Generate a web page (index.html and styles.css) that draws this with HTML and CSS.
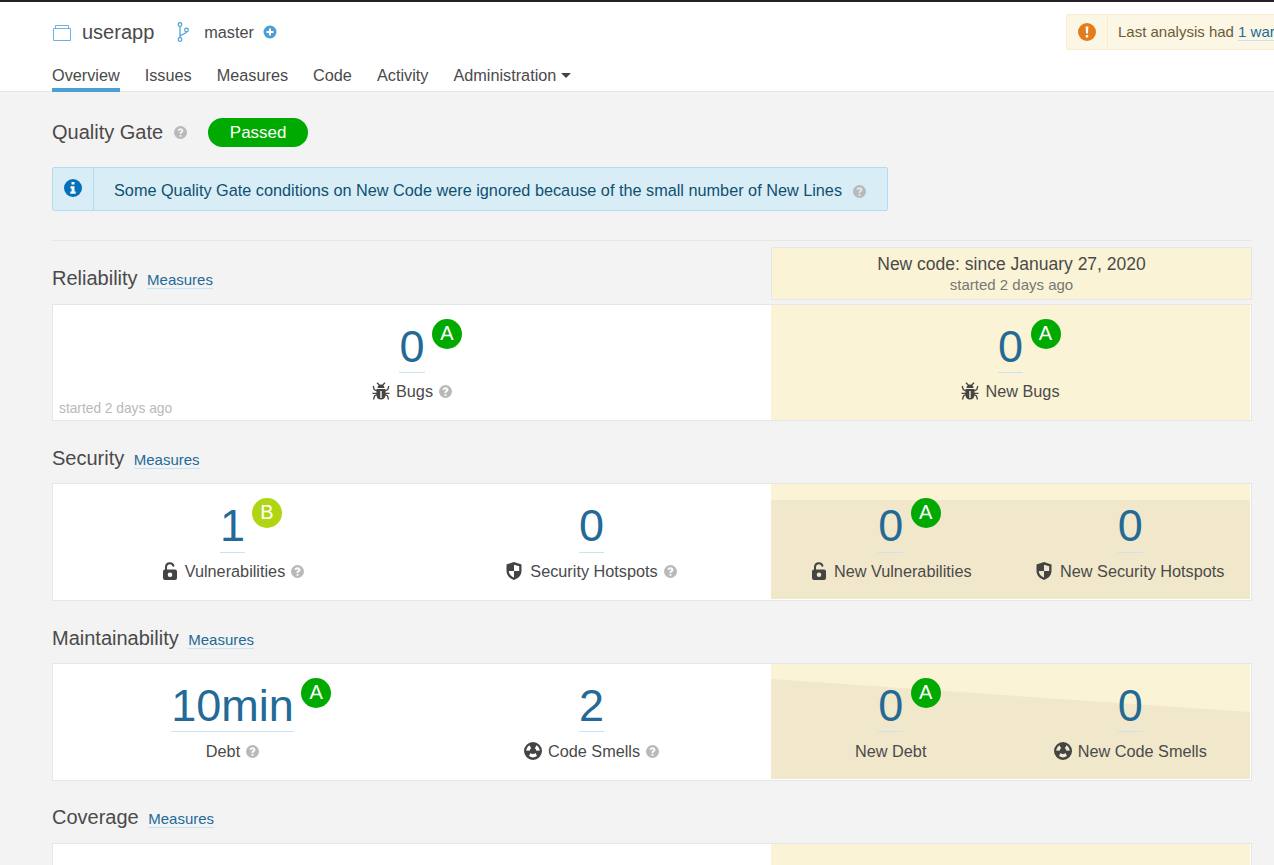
FILE: index.html

```html
<!DOCTYPE html>
<html lang="en">
<head>
    <meta charset="UTF-8">
    <title>userapp</title>
    <link rel="stylesheet" href="styles.css">
</head>
<body>
    <svg class="sprites" width="0" height="0">
        <symbol id="help" viewBox="0 0 14 14"><path fill-rule="evenodd" d="M7 0a7 7 0 1 1 0 14A7 7 0 0 1 7 0zM6 9.600v2h2v-2zM7 2.400c-1.800 0-3 1-3.200 2.700l2 .3c.1-.8.5-1.200 1.100-1.200.6 0 1 .3 1 .9 0 .5-.3.8-.9 1.200-.9.6-1 1.200-1 2.400h2c0-.7.1-.9.8-1.400.9-.6 1.300-1.300 1.300-2.300C10.100 3.400 8.800 2.400 7 2.400z"/></symbol>
        <symbol id="bug" viewBox="0 0 18 18"><path d="M5.500 6c0-2.200 1.500-3.500 3.500-3.500s3.500 1.300 3.500 3.500z"/><path fill-rule="evenodd" d="M4.500 7h9v6c0 3-2 4.500-4.500 4.500S4.500 16 4.500 13zM8.300 9v7h1.400V9z"/><path fill="none" stroke="currentColor" stroke-width="1.300" d="M5 .8l2.500 2.500M13 .8l-2.500 2.500M1.200 4l1 3.500L5 9M16.800 4l-1 3.500L13 9M.5 11.300H5M17.500 11.300H13M1.500 17.500l1-3.500L5 12.500M16.500 17.500l-1-3.500-2.500-1.500"/></symbol>
        <symbol id="lock" viewBox="1 0 14 18"><path fill="none" stroke="currentColor" stroke-width="2" stroke-linecap="round" d="M4 8V5a3.800 3.800 0 0 1 7.400-1.200"/><path fill-rule="evenodd" d="M3 7.500h10a2 2 0 0 1 2 2V16a2 2 0 0 1-2 2H3a2 2 0 0 1-2-2V9.500a2 2 0 0 1 2-2zm5 3a2.300 2.300 0 1 0 0 4.600 2.300 2.300 0 0 0 0-4.600z"/></symbol>
        <symbol id="shield" viewBox="0 0 16 18"><path fill-rule="evenodd" d="M8 0l7.500 2.500V9c0 4.500-3.500 7.500-7.500 9-4-1.500-7.500-4.500-7.500-9V2.500zM8 2.700v6.300h5.200V4.300zM8 9H2.800c0 3.200 2.400 5.300 5.200 6.500z"/></symbol>
        <symbol id="smell" viewBox="0 0 18 18"><path fill-rule="evenodd" d="M9 0a9 9 0 1 1 0 18A9 9 0 0 1 9 0zM7.200 6.300a3.400 3.400 0 0 0-1.600 2.500L2 8.500a7 7 0 0 1 3.400-5.300zM10.800 6.300l1.800-3.100A7 7 0 0 1 16 8.500l-3.600.3a3.400 3.400 0 0 0-1.600-2.500zM6.500 11l-1.500 3.100a7 7 0 0 0 8 0L11.500 11a3.400 3.400 0 0 1-5 0z"/></symbol>
    </svg>

    <header class="top">
        <div class="project">
            <svg class="qualifier" width="18" height="16" viewBox="0 0 18 16"><path d="M2.500 3.500v-3h13v3M.5 3.500h17v12H.5z" fill="none" stroke="#6fb1dd"/></svg>
            <span class="project-name">userapp</span>
            <svg class="branch-icon" width="12" height="20" viewBox="0 0 12 20"><g fill="none" stroke="#4b9fd5" stroke-width="1.200"><circle cx="3" cy="2.500" r="1.800"/><circle cx="3" cy="17.500" r="1.800"/><circle cx="9.500" cy="8" r="1.800"/><path d="M3 4.300v11.400M9.500 9.800c0 2.200-6.500 2.200-6.500 5"/></g></svg>
            <span class="branch">master</span>
            <svg class="plus" width="14" height="14" viewBox="0 0 14 14"><circle cx="7" cy="7" r="6.500" fill="#4b9fd5"/><path d="M3.500 7h7M7 3.500v7" stroke="#fff" stroke-width="2"/></svg>
            <div class="warning-wrap">
                <div class="warning">
                    <div class="warning-icon">
                        <svg width="18" height="18" viewBox="0 0 18 18"><circle cx="9" cy="9" r="9" fill="#e37c1c"/><path d="M7.600 3.500h2.800l-.4 7H8zM7.800 12h2.400v2.400H7.800z" fill="#fff"/></svg>
                    </div>
                    <div class="warning-text">Last analysis had <a href="#" class="link">1 warning</a></div>
                </div>
            </div>
        </div>
        <nav class="nav">
            <a href="#" class="nav-item active">Overview</a>
            <a href="#" class="nav-item">Issues</a>
            <a href="#" class="nav-item">Measures</a>
            <a href="#" class="nav-item">Code</a>
            <a href="#" class="nav-item">Activity</a>
            <a href="#" class="nav-item">Administration <span class="caret"></span></a>
        </nav>
    </header>

    <main class="content">
        <div class="gate">
            <h2 class="gate-title">Quality Gate</h2>
            <svg class="help gate-help"><use href="#help"/></svg>
            <span class="pill">Passed</span>
        </div>
        <div class="info">
            <div class="info-icon">
                <svg width="18" height="18" viewBox="0 0 18 18"><circle cx="9" cy="9" r="9" fill="#0271b9"/><path d="M7.500 3h3v2.600h-3zM6.500 7.200h4v5.400h1.200v2.200H6.300v-2.200h1.300V9.400H6.500z" fill="#fff"/></svg>
            </div>
            <div class="info-text">Some Quality Gate conditions on New Code were ignored because of the small number of New Lines <svg class="help info-help"><use href="#help"/></svg></div>
        </div>
        <div class="divider"></div>

        <div class="reliability-head">
            <div class="domain-head first-head">
                <h3 class="domain-title">Reliability</h3>
                <a href="#" class="link domain-link">Measures</a>
            </div>
            <div class="period">
                <div class="period-title">New code: since January 27, 2020</div>
                <div class="period-sub">started 2 days ago</div>
            </div>
        </div>
        <section class="card first">
            <div class="half">
                <div class="measure">
                    <div class="value-line"><a href="#" class="value">0<span class="rating a">A</span></a></div>
                    <div class="label"><svg class="type-icon"><use href="#bug"/></svg>Bugs<svg class="help"><use href="#help"/></svg></div>
                </div>
                <div class="started">started 2 days ago</div>
            </div>
            <div class="half new">
                <div class="measure">
                    <div class="value-line"><a href="#" class="value">0<span class="rating a">A</span></a></div>
                    <div class="label"><svg class="type-icon"><use href="#bug"/></svg>New Bugs</div>
                </div>
            </div>
        </section>

        <div class="domain-head">
            <h3 class="domain-title">Security</h3>
            <a href="#" class="link domain-link">Measures</a>
        </div>
        <section class="card">
            <div class="half">
                <div class="measure">
                    <div class="value-line"><a href="#" class="value">1<span class="rating b">B</span></a></div>
                    <div class="label"><svg class="type-icon lock"><use href="#lock"/></svg>Vulnerabilities<svg class="help"><use href="#help"/></svg></div>
                </div>
                <div class="measure">
                    <div class="value-line"><a href="#" class="value">0</a></div>
                    <div class="label"><svg class="type-icon shield"><use href="#shield"/></svg>Security Hotspots<svg class="help"><use href="#help"/></svg></div>
                </div>
            </div>
            <div class="half new">
                <div class="chart chart-flat"></div>
                <div class="measure">
                    <div class="value-line"><a href="#" class="value">0<span class="rating a">A</span></a></div>
                    <div class="label"><svg class="type-icon lock"><use href="#lock"/></svg>New Vulnerabilities</div>
                </div>
                <div class="measure">
                    <div class="value-line"><a href="#" class="value">0</a></div>
                    <div class="label"><svg class="type-icon shield"><use href="#shield"/></svg>New Security Hotspots</div>
                </div>
            </div>
        </section>

        <div class="domain-head">
            <h3 class="domain-title">Maintainability</h3>
            <a href="#" class="link domain-link">Measures</a>
        </div>
        <section class="card tight">
            <div class="half">
                <div class="measure">
                    <div class="value-line"><a href="#" class="value">10min<span class="rating a">A</span></a></div>
                    <div class="label">Debt<svg class="help"><use href="#help"/></svg></div>
                </div>
                <div class="measure">
                    <div class="value-line"><a href="#" class="value">2</a></div>
                    <div class="label"><svg class="type-icon"><use href="#smell"/></svg>Code Smells<svg class="help"><use href="#help"/></svg></div>
                </div>
            </div>
            <div class="half new">
                <div class="chart chart-slope"></div>
                <div class="measure">
                    <div class="value-line"><a href="#" class="value">0<span class="rating a">A</span></a></div>
                    <div class="label">New Debt</div>
                </div>
                <div class="measure">
                    <div class="value-line"><a href="#" class="value">0</a></div>
                    <div class="label"><svg class="type-icon"><use href="#smell"/></svg>New Code Smells</div>
                </div>
            </div>
        </section>

        <div class="domain-head last-head">
            <h3 class="domain-title">Coverage</h3>
            <a href="#" class="link domain-link">Measures</a>
        </div>
        <section class="card">
            <div class="half"></div>
            <div class="half new"></div>
        </section>
    </main>
</body>
</html>
```

FILE: styles.css

```css
html, body {
    height: 100vh;
    overflow: hidden;
}
body {
    margin: 0;
    font-family: "Liberation Sans", Arial, sans-serif;
    font-size: 16.25px;
    color: #4a4a4a;
    background-color: #f3f3f3;
}
a {
    text-decoration: none;
    color: inherit;
}
h2, h3 {
    margin: 0;
    font-weight: 400;
}
.sprites {
    position: absolute;
}
.link {
    color: #236a97;
    border-bottom: 1px solid #cae3f2;
}

/* header */
.top {
    height: 89px;
    background-color: #fff;
    border-top: 2px solid #222;
    border-bottom: 1px solid #e6e6e6;
    padding-left: 52px;
}
.project {
    display: flex;
    align-items: center;
    height: 36px;
    padding-top: 12px;
}
.qualifier {
    margin-left: 1px;
    margin-top: 1px;
}
.project-name {
    font-size: 20px;
    margin-left: 11px;
}
.branch-icon {
    margin-left: 23px;
}
.branch {
    margin-left: 15px;
}
.plus {
    margin-left: 9px;
}
.warning-wrap {
    margin-left: auto;
    width: 208px;
    overflow: hidden;
    flex: none;
}
.warning {
    display: flex;
    width: 320px;
    height: 36px;
    box-sizing: border-box;
    font-size: 15px;
    color: #6d5b37;
    background-color: #fcf6e4;
    border: 1px solid #faebcc;
    border-radius: 2px;
}
.warning-icon {
    width: 40px;
    display: flex;
    align-items: center;
    justify-content: center;
    border-right: 1px solid #faebcc;
}
.warning-text {
    padding-left: 10px;
    line-height: 33px;
}
.nav {
    display: flex;
    gap: 25px;
    margin-top: 12px;
}
.nav-item {
    height: 30px;
    line-height: 27px;
    box-sizing: border-box;
}
.nav-item.active {
    border-bottom: 4px solid #4b9fd5;
}
.caret {
    display: inline-block;
    border: 5px solid transparent;
    border-top-color: #444;
    border-bottom: 0;
    vertical-align: 3px;
}

/* main column */
.content {
    padding: 26px 22px 0 52px;
}
.gate {
    display: flex;
    align-items: center;
    height: 29px;
}
.gate-title {
    font-size: 20px;
}
.help {
    width: 13px;
    height: 13px;
    fill: #b9b9b9;
    margin-left: 6px;
    flex: none;
}
.gate-help {
    margin-left: 11px;
}
.pill {
    margin-left: 21px;
    width: 100px;
    height: 29px;
    line-height: 29px;
    font-size: 17px;
    text-align: center;
    color: #fff;
    background-color: #00aa00;
    border-radius: 15px;
}
.info {
    display: flex;
    width: 836px;
    height: 44px;
    box-sizing: border-box;
    margin-top: 20px;
    color: #0e516f;
    background-color: #d9edf7;
    border: 1px solid #b4dcf0;
    border-radius: 2px;
}
.info-icon {
    width: 41px;
    display: flex;
    align-items: center;
    justify-content: center;
    border-right: 1px solid #b4dcf0;
    padding-bottom: 2px;
    box-sizing: border-box;
}
.info-text {
    padding-left: 20px;
    line-height: 44px;
    white-space: nowrap;
}
.info-help {
    margin-left: 6px;
    vertical-align: -2px;
}
.divider {
    height: 1px;
    margin-top: 29px;
    background-color: #e6e6e6;
}

/* domains */
.reliability-head {
    display: flex;
    justify-content: space-between;
    align-items: flex-end;
    margin-top: 6px;
    height: 53px;
    margin-bottom: 4px;
}
.domain-head {
    display: flex;
    align-items: baseline;
    height: 24px;
    margin-top: 26px;
    margin-bottom: 12px;
}
.first-head {
    margin: 0 0 9px;
}
.last-head {
    margin-top: 25px;
    margin-bottom: 13px;
}
.domain-title {
    font-size: 20px;
}
.domain-link {
    font-size: 15px;
    margin-left: 9.5px;
}
.period {
    width: 481px;
    height: 53px;
    box-sizing: border-box;
    text-align: center;
    background-color: #fbf3d5;
    border: 1px solid #e6e6e6;
}
.period-title {
    font-size: 17.5px;
    margin-top: 6px;
}
.period-sub {
    font-size: 15px;
    color: #777;
    margin-top: 1px;
}
.card {
    display: flex;
    height: 118px;
    box-sizing: border-box;
    background-color: #fff;
    border: 1px solid #e6e6e6;
    padding: 0 1px 1px 0;
}
.card.first {
    height: 117px;
    padding-bottom: 0;
}
.card.first .value,
.card.tight .value {
    height: 51px;
}
.half {
    position: relative;
    flex: 0 0 718px;
    display: flex;
}
.half.new {
    flex: 0 0 479px;
    background-color: #fbf3d5;
}
.started {
    position: absolute;
    left: 6px;
    bottom: 4px;
    font-size: 13.75px;
    color: #b9b9b9;
}
.chart {
    position: absolute;
    left: 0;
    right: 0;
    top: 0;
    bottom: 0;
    background-color: #f1e8cb;
}
.chart-flat {
    top: 16px;
}
.chart-slope {
    clip-path: polygon(0 15px, 100% 48px, 100% 100%, 0 100%);
}
.measure {
    position: relative;
    flex: 1 1 0;
    display: flex;
    flex-direction: column;
    align-items: center;
}
.value-line {
    height: 69px;
}
.card.first .value-line {
    height: 68px;
}
.value {
    position: relative;
    display: inline-block;
    margin-top: 16px;
    height: 52px;
    line-height: 52px;
    font-size: 45px;
    color: #236a97;
    border-bottom: 1px solid #cae3f2;
}
.rating {
    position: absolute;
    left: 100%;
    top: -2px;
    margin-left: 7.5px;
    width: 30px;
    height: 30px;
    line-height: 29px;
    border-radius: 50%;
    text-align: center;
    font-size: 20px;
    color: #fff;
}
.rating.a {
    background-color: #00aa00;
}
.rating.b {
    margin-left: 7px;
    background-color: #b0d513;
}
.label {
    display: flex;
    align-items: center;
    height: 20px;
    margin-top: 8px;
}
.type-icon {
    width: 18px;
    height: 18px;
    margin-right: 6px;
    fill: #444;
    color: #444;
    flex: none;
}
.type-icon.lock {
    width: 14px;
    margin-left: 2px;
    margin-right: 8px;
}
.type-icon.shield {
    width: 16px;
    margin-right: 8px;
}
```
